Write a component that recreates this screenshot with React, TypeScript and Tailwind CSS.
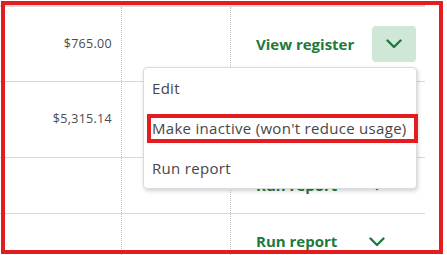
const Chevron = () => (
    <svg width="16" height="10" viewBox="0 0 16 10" fill="none">
        <path
            d="M1.5 1.5 L8 8 L14.5 1.5"
            stroke="#1d7a3c"
            strokeWidth="2.4"
            strokeLinecap="round"
            strokeLinejoin="round"
        />
    </svg>
)

type Row = {
    amount?: string
    action: string
    height: string
    hover?: boolean
}

const rows: Row[] = [
    { amount: '$765.00', action: 'View register', height: 'h-[75px]', hover: true },
    { amount: '$5,315.14', action: 'Run report', height: 'h-[76px]' },
    { action: 'Run report', height: 'h-[56px]' },
    { action: 'Run report', height: 'h-[56px]' }
]

export default function App() {
    return (
        <div className="relative h-[255px] w-[447px] overflow-hidden bg-white font-['Open_Sans',sans-serif]">
            <div className="pt-[5px]">
                <div className="w-[425px] border-t-2 border-[#dadce0]">
                    {rows.map((row, i) => (
                        <div
                            key={i}
                            className={`grid grid-cols-[122px_109px_194px] border-b border-[#d6d8dc] ${row.height}`}
                        >
                            <div className="flex items-center justify-end border-r border-dotted border-[#c4c4c4] pr-[9px] text-[12.5px] tracking-[0.3px] text-[#4a4b4f]">
                                {row.amount}
                            </div>
                            <div className="border-r border-dotted border-[#c4c4c4]" />
                            <div className="flex items-center pl-[25px]">
                                <span className="text-[15px] font-bold text-[#1d7a3c]">
                                    {row.action}
                                </span>
                                <button
                                    type="button"
                                    className={`ml-[18px] flex h-[36px] w-[44px] items-center justify-center rounded-[4px] ${row.hover ? 'bg-[#cfe7d7]' : ''}`}
                                >
                                    <Chevron />
                                </button>
                            </div>
                        </div>
                    ))}
                </div>
            </div>

            {/* dropdown menu */}
            <div className="absolute left-[143px] top-[67px] w-[274px] rounded-[4px] border border-[#d9dbde] bg-white shadow-[1px_2px_4px_rgba(0,0,0,0.18)]">
                {['Edit', "Make inactive (won't reduce usage)", 'Run report'].map(
                    (item) => (
                        <div
                            key={item}
                            className="flex h-[40px] items-center whitespace-nowrap pl-[8px] text-[15px] tracking-[0.3px] text-[#45464a]"
                        >
                            {item}
                        </div>
                    )
                )}
            </div>

            {/* annotation boxes */}
            <div className="absolute left-[147px] top-[114px] h-[29px] w-[271px] border-4 border-[#e41b1f]" />
            <div className="absolute left-[1px] top-[1px] h-[253px] w-[442px] border-4 border-[#e41b1f]" />
        </div>
    )
}
